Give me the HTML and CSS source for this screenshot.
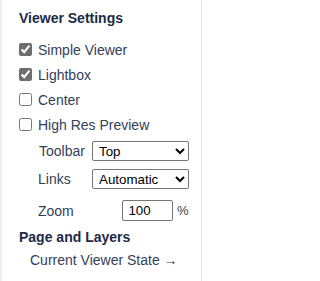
FILE: index.html
```html
<!DOCTYPE html>
<html>
<head>
<meta charset="utf-8">
<link rel="stylesheet" href="styles.css">
</head>
<body>
<div class="panel">
  <h3 class="heading">Viewer Settings</h3>
  <div class="checks">
    <label class="check"><input type="checkbox" checked><span>Simple Viewer</span></label>
    <label class="check"><input type="checkbox" checked><span>Lightbox</span></label>
    <label class="check"><input type="checkbox"><span>Center</span></label>
    <label class="check"><input type="checkbox"><span>High Res Preview</span></label>
  </div>
  <div class="field field-toolbar">
    <span class="field-label">Toolbar</span>
    <select class="select"><option>Top</option><option>Bottom</option></select>
  </div>
  <div class="field field-links">
    <span class="field-label">Links</span>
    <select class="select"><option>Automatic</option><option>None</option></select>
  </div>
  <div class="field field-zoom">
    <span class="field-label">Zoom</span>
    <input class="zoom-input" type="text" value="100">
    <span class="unit">%</span>
  </div>
  <h3 class="heading heading-pages">Page and Layers</h3>
  <a class="state-link" href="#">Current Viewer State →</a>
</div>
</body>
</html>
```

FILE: styles.css
```css
html, body {
  margin: 0;
  padding: 0;
  background: #ffffff;
}
body {
  width: 203px;
  height: 281px;
  overflow: hidden;
  font-family: "Liberation Sans", Arial, sans-serif;
}
.panel {
  box-sizing: border-box;
  width: 202px;
  height: 281px;
  border-left: 2px solid #eef0f4;
  border-right: 1px solid #e2e4e8;
  padding: 10px 0 0 17px;
  color: #34405a;
}
.heading {
  margin: 0;
  font-size: 14px;
  line-height: 16px;
  font-weight: bold;
  color: #1c2a48;
}
.checks {
  display: flex;
  flex-direction: column;
  margin-top: 11px;
}
.check {
  display: flex;
  align-items: center;
  height: 25px;
  font-size: 14px;
  line-height: 16px;
}
.check input {
  width: 13px;
  height: 13px;
  margin: 0 6px 0 0;
  accent-color: #6e6e6e;
}
.field {
  display: flex;
  align-items: center;
  font-size: 14px;
  padding-left: 20px;
}
.field-toolbar { margin-top: 4px; }
.field-links { margin-top: 8px; }
.field-zoom { margin-top: 11px; }
.field-label {
  width: 53px;
  flex: none;
}
.field-links .field-label,
.field-zoom .field-label { margin-left: -1px; width: 54px; }
.select {
  box-sizing: border-box;
  width: 97px;
  height: 20px;
  margin: 0;
  font-family: "Liberation Sans", Arial, sans-serif;
  font-size: 13.333px;
  color: #000000;
  background: #ffffff;
  border: 1px solid #767676;
  border-radius: 2px;
  padding: 0 0 0 2px;
}
.zoom-input {
  box-sizing: border-box;
  width: 51px;
  height: 21px;
  margin: 0 0 0 30px;
  font-family: "Liberation Sans", Arial, sans-serif;
  font-size: 13.333px;
  color: #000000;
  border: 1px solid #767676;
  border-radius: 2px;
  padding: 0 16px 0 0;
  text-align: center;
}
.unit {
  margin-left: 4px;
  font-size: 13px;
}
.heading-pages {
  margin-top: 8px;
}
.state-link {
  display: block;
  margin: 7px 0 0 11px;
  font-size: 14px;
  line-height: 16px;
  color: #34405a;
  text-decoration: none;
}
```
